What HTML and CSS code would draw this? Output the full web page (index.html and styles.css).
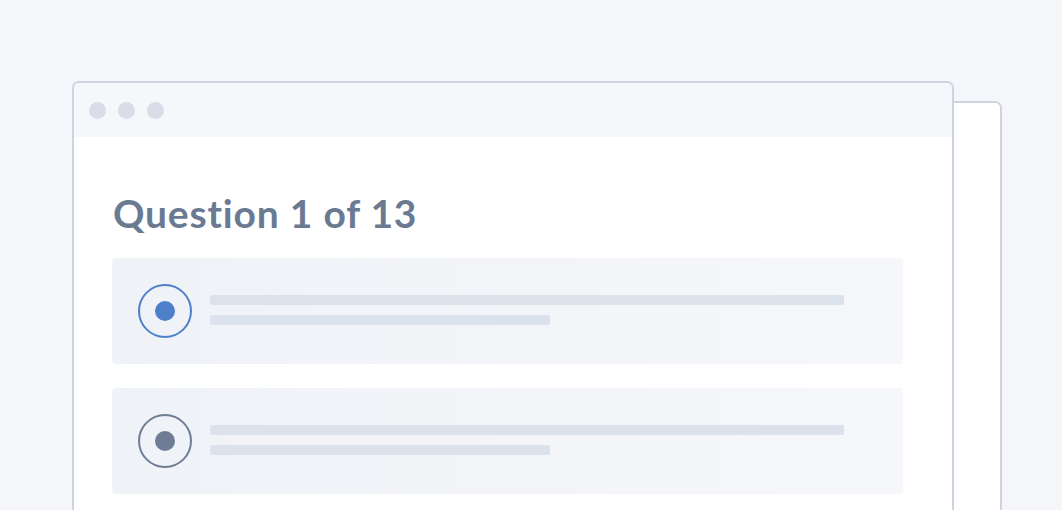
FILE: index.html
```html
<!DOCTYPE html>
<html lang="en">
<head>
  <meta charset="UTF-8" />
  <title>Quiz preview</title>
  <link rel="stylesheet" href="styles.css">
</head>
<body>
  <div class="stage">
    <div class="windows">
      <div class="window-back"></div>

      <div class="window">
        <div class="titlebar">
          <span class="dot"></span>
          <span class="dot"></span>
          <span class="dot"></span>
        </div>

        <div class="content">
          <h1>Question 1 of 13</h1>

          <div class="option">
            <span class="radio radio-active"><span class="radio-dot"></span></span>
            <div class="lines">
              <div class="line line-long"></div>
              <div class="line line-short"></div>
            </div>
          </div>

          <div class="option">
            <span class="radio"><span class="radio-dot"></span></span>
            <div class="lines">
              <div class="line line-long"></div>
              <div class="line line-short"></div>
            </div>
          </div>
        </div>
      </div>
    </div>
  </div>
</body>
</html>
```

FILE: styles.css
```css
* {
  box-sizing: border-box;
}

body {
  margin: 0;
  background: #f4f6fa;
  font-family: 'Lato', sans-serif;
}

.stage {
  height: 100vh;
  overflow: hidden;
  padding: 81px 0 0 72px;
}

.windows {
  position: relative;
  width: 882px;
}

/* second window peeking out behind the main one */
.window-back {
  position: absolute;
  top: 20px;
  left: 48px;
  width: 882px;
  height: 460px;
  background: #fff;
  border: 2px solid #cfd3df;
  border-radius: 7px;
}

.window {
  position: relative;
  background: #fff;
  border: 2px solid #cfd3df;
  border-radius: 7px;
  height: 460px;
}

.titlebar {
  display: flex;
  align-items: center;
  gap: 12px;
  height: 54px;
  padding-left: 15px;
  background: #f5f7fa;
  border-radius: 5px 5px 0 0;
}

.dot {
  width: 17px;
  height: 17px;
  border-radius: 50%;
  background: #d9dde8;
}

.content {
  padding: 57px 49px 0 38px;
}

h1 {
  margin: 0 0 25px 1px;
  font-size: 39px;
  line-height: 1;
  font-weight: 700;
  letter-spacing: 0.8px;
  font-variant-ligatures: none;
  color: #6b7a93;
}

.option {
  display: flex;
  align-items: center;
  height: 106px;
  margin-bottom: 24px;
  padding-left: 26px;
  border-radius: 4px;
  background: linear-gradient(90deg, #eff2f7, #f6f7fa);
}

.radio {
  display: flex;
  align-items: center;
  justify-content: center;
  width: 54px;
  height: 54px;
  border: 2px solid #6e7c95;
  border-radius: 50%;
}

.radio-dot {
  width: 20px;
  height: 20px;
  border-radius: 50%;
  background: #6e7c95;
}

.radio-active {
  border-color: #4e80ca;
}

.radio-active .radio-dot {
  background: #4e80ca;
}

.lines {
  display: flex;
  flex-direction: column;
  gap: 10px;
  margin-left: 18px;
  margin-top: -2px;
}

.line {
  height: 10px;
  border-radius: 2px;
  background: #dce2ec;
}

.line-long {
  width: 634px;
}

.line-short {
  width: 340px;
}
```
